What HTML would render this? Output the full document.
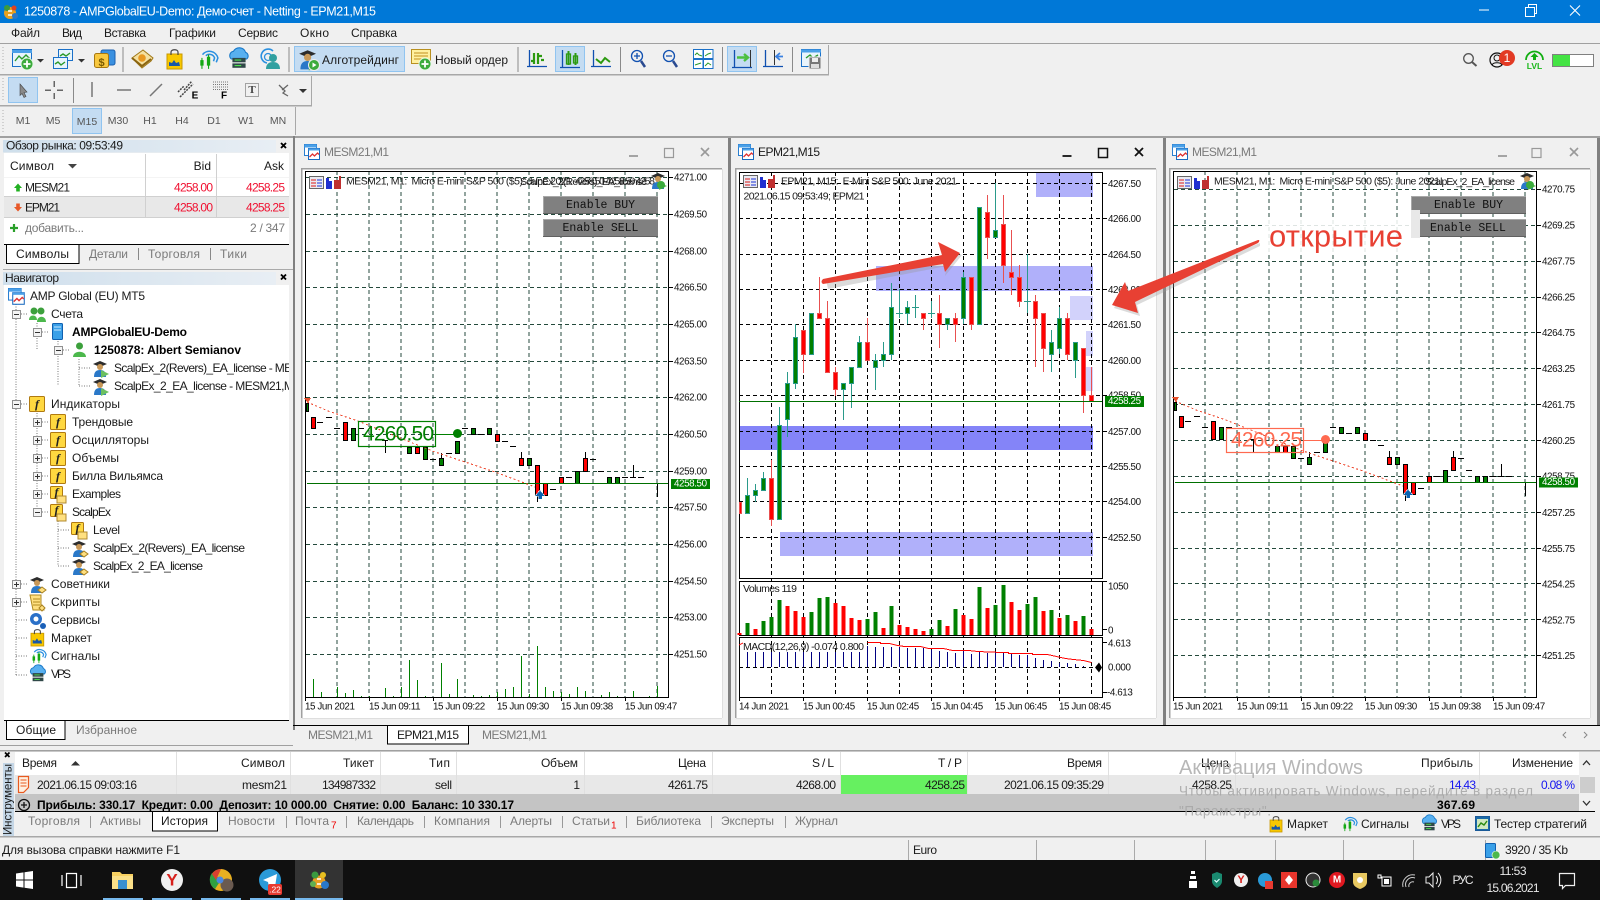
<!DOCTYPE html>
<html lang="ru"><head><meta charset="utf-8"><title>MT5</title>
<style>
html,body{margin:0;padding:0;background:#f0f0f0;width:1600px;height:900px;overflow:hidden}
svg{display:block}
text{font-family:"Liberation Sans","Noto Sans CJK JP",sans-serif;font-size:12px;dominant-baseline:central;fill:#1a1a1a;white-space:pre}
.ax{font-size:9.8px;letter-spacing:-.4px;fill:#111}
.g{fill:#7a7a7a}
.b{font-weight:bold;fill:#000}
.e{text-anchor:end}
.c{text-anchor:middle}
.tf{font-size:10.5px;fill:#555;text-anchor:middle}
.m{font-family:"Liberation Mono",monospace;font-size:11.5px;fill:#111;text-anchor:middle}
.f{font-family:"Liberation Serif",serif;font-style:italic;font-weight:bold;font-size:12px;text-anchor:middle;fill:#222}
.n{fill:none}
.ce{shape-rendering:crispEdges}
</style></head><body>
<svg xmlns="http://www.w3.org/2000/svg" width="1600" height="900" viewBox="0 0 1600 900">
<defs>
<g id="w"><rect x=".5" y=".5" width="12" height="11" fill="#fff" stroke="#2a7fd0"/><rect x=".5" y=".5" width="12" height="3" fill="#4aa0e8"/><rect x="4.5" y="4.5" width="11" height="11" fill="#fff" stroke="#1a6ac0"/><rect x="4.5" y="4.5" width="11" height="2" fill="#4aa0e8"/><path d="M5.5 13l3-3 2 2 3-3 1.500 1.500" fill="none" stroke="#e03030" stroke-width="1.300"/></g>
<g id="hd"><rect x=".5" y=".5" width="14" height="12" fill="#eaeaf2" stroke="#666"/><path d="M2 4h5M2 7h5M2 10h5" stroke="#e06060" stroke-width="1.600"/><path d="M8 4h5M8 7h5M8 10h5" stroke="#6070e0" stroke-width="1.600"/><path d="M17 2h3v3h3v8h-6z" fill="#2030d0"/><path d="M25 4h5V0h2v13h-7z" fill="#c03030"/></g>
<g id="bx"><rect x=".5" y=".5" width="15" height="15" rx="1" fill="#ffd840" stroke="#b07a10"/></g>
<g id="bxf"><rect x=".5" y=".5" width="12" height="12" rx="1" fill="#ffd840" stroke="#b07a10"/><path d="M7 10h9v7H7z" fill="#ffe080" stroke="#b08a30"/></g>
<g id="rb"><path d="M1 4l7-3 7 3-7 3z" fill="#2c2c2c"/><circle cx="8" cy="7" r="3" fill="#c89858"/><path d="M2 17c0-5 2-7 6-7s6 2 6 7z" fill="#2a78c8"/><path d="M9 10l8 4-8 4z" fill="#6cc060"/></g>
<g id="rbk"><path d="M1 4l7-3 7 3-7 3z" fill="#2c2c2c"/><circle cx="8" cy="7" r="3" fill="#c89858"/><path d="M2 17c0-5 2-7 6-7s6 2 6 7z" fill="#2a78c8"/><path d="M13 11l4 3-4 3-4-3z" fill="#ffe080" stroke="#a88020"/></g>
<g id="pls"><circle r="6" fill="#3cab3c" stroke="#e8f8e8"/><path d="M-3.500 0h7M0-3.500v7" stroke="#fff" stroke-width="1.800"/></g>
<g id="bag"><rect x="0" y="5" width="15" height="15" fill="#f8c800" stroke="#c89800"/><path d="M4 6V3c0-3 7-3 7 0v3" class="n" stroke="#444" stroke-width="1.200"/><path d="M2 17v-4l3 1 2-3 2 3 3-1 1 4z" fill="#1858a8"/></g>
<g id="sig"><path d="M5 6a8 8 0 0 1 14 3l-1.500 4M8 7a5 5 0 0 1 8 2l-1 3" class="n" stroke="#2a90e0" stroke-width="1.400"/><path d="M3 11h3v5H3zM9 8h3v8H9z" fill="#14a814"/><path d="M4.500 9v10M10.500 6v13" stroke="#14a814"/></g>
<g id="cl"><path d="M3 10a4 4 0 0 1 2-7 6 6 0 0 1 11 1 3.500 3.500 0 0 1 1 6z" fill="#58b0f0" stroke="#1878c8"/><rect x="4" y="9" width="12" height="4" fill="#304848"/><rect x="4" y="14" width="12" height="4" fill="#304848"/><path d="M6 11h6M6 16h6" stroke="#4ce04c"/></g>
</defs>

<!-- base -->
<rect width="1600" height="900" fill="#f0f0f0"/>
<rect width="1600" height="23" fill="#0078d7"/>
<g transform="translate(2 3)"><circle cx="8" cy="10" r="6" fill="#e8a020"/><circle cx="5" cy="5" r="3" fill="#3a9a40"/><circle cx="12" cy="5" r="2.500" fill="#e04020"/><circle cx="13" cy="13" r="3" fill="#2a78c8"/><path d="M6 8h4M6 12h4" stroke="#fff" stroke-width="1.500"/></g>
<text x="24" y="11.500" style="fill:#fff;font-size:12.500px" textLength="352">1250878 - AMPGlobalEU-Demo: Демо-счет - Netting - EPM21,M15</text>
<path d="M1479 10h10" stroke="#fff"/><path d="M1525.500 7.500h9v9h-9zM1528.500 7.500v-3h8v9h-2" fill="none" stroke="#fff"/><path d="M1570 5.500l10 10M1580 5.500l-10 10" stroke="#fff" stroke-width="1.100"/>

<!-- menu -->
<g>
<text x="11" y="33" textLength="29">Файл</text><text x="62" y="33" textLength="20">Вид</text><text x="104" y="33" textLength="42">Вставка</text><text x="169" y="33" textLength="47">Графики</text><text x="238" y="33" textLength="40">Сервис</text><text x="300" y="33" textLength="29">Окно</text><text x="351" y="33" textLength="46">Справка</text>
</g>
<!-- toolbars -->
<g class="ce">
<rect x="0" y="43" width="1600" height="1" fill="#a0a0a0"/>
<rect x="0" y="74" width="829" height="1.500" fill="#a8a8a8"/><rect x="828" y="45" width="1" height="30" fill="#a8a8a8"/>
<rect x="0" y="105" width="312" height="1.500" fill="#a8a8a8"/><rect x="311" y="76" width="1" height="30" fill="#a8a8a8"/>
<rect x="295" y="107" width="1" height="28" fill="#a8a8a8"/>
<path d="M123 47v25M289 47v25M518 47v25M620.500 47v25M722.500 47v25M792.500 47v25M73.500 78v25" stroke="#8a8a8a"/>
<path d="M3 47v24M3 78v24M3 110v22" stroke="#b0b0b0" stroke-dasharray="1 2"/>
<rect x="294.500" y="46.500" width="110" height="25" fill="#c4dcf2" stroke="#90c4f0"/>
<rect x="555.500" y="46.500" width="29" height="25" fill="#c4dcf2" stroke="#90c4f0"/>
<rect x="727.500" y="46.500" width="29" height="25" fill="#c4dcf2" stroke="#90c4f0"/>
<rect x="8.500" y="77.500" width="29" height="25" fill="#c4dcf2" stroke="#90c4f0"/>
<rect x="72.500" y="108.500" width="29" height="25" fill="#c4dcf2" stroke="#90c4f0"/>
</g>
<!-- row 1 icons -->
<g transform="translate(12 49)"><rect x=".5" y=".5" width="19" height="17" fill="#e8f4fc" stroke="#1a70c8"/><path d="M0 2.500h20" stroke="#4aa0e8" stroke-width="3"/><path d="M3 12l4-5 3 3 4-4 4 4" class="n" stroke="#2a9a2a" stroke-width="1.400"/><use href="#pls" x="15" y="15"/></g>
<path d="M37 59h7l-3.500 3.500z" fill="#333"/>
<g transform="translate(53 49)"><rect x="5.500" y=".5" width="14" height="11" fill="#e8f4fc" stroke="#1a70c8"/><rect x=".5" y="8.500" width="14" height="11" fill="#e8f4fc" stroke="#1a70c8"/><path d="M7 7l3-2 3 2 4-3M2 15l3-2 3 3 4-3" class="n" stroke="#2a9a2a" stroke-width="1.400"/></g>
<path d="M78 59h7l-3.500 3.500z" fill="#333"/>
<g transform="translate(94 49)"><rect x="7" y="1" width="14" height="15" rx="2" fill="#3a90e0" stroke="#1a60b0"/><rect x=".5" y="4.500" width="14" height="14" rx="2" fill="#f8c840" stroke="#a87810"/></g><text x="101.500" y="63" class="c b" style="font-size:11px;fill:#7a5a00">$</text>
<g transform="translate(131 49)"><path d="M1 9L12 1l10 8-2 3-9 7z" fill="#f4e0a0" stroke="#a07818"/><path d="M1 9l10 8 9-7" class="n" stroke="#8a6410" stroke-width="2"/><circle cx="11" cy="9" r="3.800" fill="#e89820"/></g>
<use href="#bag" x="167" y="49"/>
<g transform="translate(197 48) scale(1.100)"><use href="#sig"/></g>
<g transform="translate(228 48) scale(1.100)"><use href="#cl"/></g>
<g transform="translate(260 49)"><path d="M7 14a7 7 0 1 1 6-12" class="n" stroke="#2a90e0" stroke-width="1.600"/><circle cx="8" cy="8" r="3.500" class="n" stroke="#2a90e0" stroke-width="1.300"/><circle cx="13" cy="9" r="4" fill="#30a0a0"/><path d="M6 20c0-5 3-7 7-7s7 2 7 7z" fill="#30a0a0"/></g>
<g transform="translate(298 49) scale(1.200)"><use href="#rb"/></g><circle cx="314" cy="65" r="5.500" fill="#3cab3c" stroke="#eee"/><path d="M312.500 62.500l4 2.500-4 2.500z" fill="#fff"/>
<text x="322" y="60" textLength="77">Алготрейдинг</text>
<g transform="translate(411 49)"><rect x=".5" y=".5" width="19" height="14" fill="#fff0a0" stroke="#b89020"/><path d="M3 4h14M3 7h14M3 10h14" stroke="#c09020"/><use href="#pls" x="14" y="15"/></g>
<text x="435" y="60" textLength="73">Новый ордер</text>
<!-- chart type icons -->
<g fill="none" stroke="#1050b0" stroke-width="1.300">
<path d="M529.500 50v17M527 66.500h20"/><path d="M562.500 50v17M560 67.500h20"/><path d="M593.500 50v17M591 66.500h20"/><path d="M734.500 50v17M732 67.500h20"/><path d="M765.500 50v17M763 66.500h20"/>
<circle cx="637" cy="56" r="5.500"/><circle cx="669" cy="56" r="5.500"/>
<path d="M634 56h6M637 53v6M666 56h6"/>
<path d="M641 61l4 6M673 61l4 6" stroke-width="2.500" stroke="#2a4a90"/>
</g>
<path d="M534 53v11M538 53v11M531 61h3M542 56h-4M541 60h3" stroke="#2c9a10" stroke-width="2.200" fill="none"/>
<g fill="none" stroke="#2c9a10" stroke-width="1.300"><rect x="566.500" y="54" width="4" height="10"/><rect x="573.500" y="56" width="4" height="7"/><path d="M568.500 51v14M575.500 53v12M596 59l5 4 4-5 5 4" stroke-width="2"/></g>
<g fill="#fff" stroke="#1a70c8"><rect x="693.500" y="49.500" width="9.500" height="9"/><rect x="703.500" y="49.500" width="9.500" height="9"/><rect x="693.500" y="59.500" width="9.500" height="9"/><rect x="703.500" y="59.500" width="9.500" height="9"/></g>
<path d="M695 55l2-2 2 2 3 1M705 56l3-2 3-1M695 65l3-1 3-1M705 66l3-3 3 2" class="n" stroke="#2a9a2a"/>
<path d="M737 57.500h11M744 54l4 3.500-4 3.500" class="n" stroke="#4cc040" stroke-width="2.400"/><path d="M750.500 50v17" stroke="#333"/>
<path d="M774.500 50v15" stroke="#333"/><path d="M783 56.500h-6M780 53l-4 3.500 4 3.500" class="n" stroke="#3a80e0" stroke-width="1.800"/>
<g transform="translate(801 49)"><rect x=".5" y=".5" width="19" height="17" fill="#e8f4fc" stroke="#1a70c8"/><path d="M0 2h20" stroke="#4aa0e8" stroke-width="3"/><path d="M5 9l4-3 3 3 5-3" class="n" stroke="#2a9a2a" stroke-width="1.400"/><rect x="8" y="8" width="12" height="12" fill="#777" stroke="#eee"/><rect x="11" y="9" width="6" height="4" fill="#eee"/><rect x="10" y="15" width="8" height="4" fill="#ddd"/></g>
<!-- right icons -->
<circle cx="1468.500" cy="58.500" r="4.800" class="n" stroke="#555" stroke-width="1.300"/><path d="M1472 62l4.500 4" stroke="#555" stroke-width="2"/>
<circle cx="1497" cy="60" r="7" class="n" stroke="#111" stroke-width="1.200"/><circle cx="1497" cy="58" r="3" class="n" stroke="#111"/><path d="M1492 65c1-3 9-3 10 0" class="n" stroke="#111"/>
<circle cx="1507" cy="58" r="8" fill="#e23a24"/><text x="1507" y="58" class="c" style="fill:#fff;font-size:12px">1</text>
<path d="M1526 60a8.500 8.500 0 0 1 17 0" class="n" stroke="#12ae12" stroke-width="1.800"/><path d="M1534.500 53l4 4h-2.500v3h-3v-3h-2.500z" fill="#12ae12"/><text x="1534.500" y="66" class="c b" style="font-size:8.500px;fill:#1ab81a">LVL</text>
<rect x="1552.500" y="54.500" width="41" height="12" fill="#fff" stroke="#808080"/><rect x="1553" y="55" width="17" height="11" fill="#44e344"/>

<!-- row 2 -->
<path d="M20 84l7 8-3 .500 2 4-2 1-2-4-2 2z" fill="#8a8a8a" stroke="#444" stroke-width=".6"/>
<path d="M45 90h6M57 90h6M54 81v6M54 93v6" stroke="#666" stroke-width="1.500" class="ce"/>
<path d="M92 82v15M117 90h14M150 96l12-12" stroke="#777" stroke-width="1.500"/>
<path d="M180 97l13-13M184 90l8-9M178 92l6-6" stroke="#444" stroke-dasharray="2 1" stroke-width="1.500"/><text x="195" y="96" class="c b" style="font-size:10px">E</text>
<path d="M213 82h15M213 84.500h15M213 87h15M213 89.500h15" stroke="#777" stroke-dasharray="1 1" class="ce"/><text x="224" y="96" class="c b" style="font-size:10px">F</text>
<rect x="245.500" y="83.500" width="13" height="13" class="n" stroke="#555" stroke-dasharray="1 1"/><text x="252" y="90" class="c b" style="font-family:'Liberation Serif';font-size:11px;fill:#444">T</text>
<path d="M279 85l6 6-2 2 5 3M288 85l-6 5" class="n" stroke="#666" stroke-width="1.300"/>
<path d="M299 89h8l-4 4z" fill="#333"/>
<!-- row 3 -->
<text x="23" y="121" class="tf">M1</text><text x="53" y="121" class="tf">M5</text><text x="87" y="122" class="tf">M15</text><text x="118" y="121" class="tf">M30</text><text x="150" y="121" class="tf">H1</text><text x="182" y="121" class="tf">H4</text><text x="214" y="121" class="tf">D1</text><text x="246" y="121" class="tf">W1</text><text x="278" y="121" class="tf">MN</text>

<!-- left panels -->
<g class="ce">
<rect x="0" y="136" width="1600" height="2" fill="#a0a0a0"/>
<rect x="293" y="136" width="2" height="594" fill="#808080"/>
<linearGradient id="hg" x1="0" x2="1"><stop offset="0" stop-color="#cfdfec"/><stop offset="1" stop-color="#e8eef4"/></linearGradient>
<rect x="3" y="140" width="273" height="12.500" fill="url(#hg)"/>
<rect x="3" y="272" width="273" height="13" fill="url(#hg)"/>
<rect x="3" y="269" width="290" height="1" fill="#aaa"/>
<rect x="4" y="153" width="285" height="91" fill="#fff"/>
<rect x="4" y="197" width="285" height="20" fill="#e8e8e8"/>
<path d="M4 177.500h285" stroke="#f4f4f4"/>
<path d="M4 196.500h285M4 217.500h285M145.500 154v63M216.500 154v63" stroke="#d0d0d0"/>
<rect x="4" y="285" width="285" height="435" fill="#fff"/>
<rect x="4" y="244" width="285" height="1" fill="#000"/>
<rect x="4" y="720" width="285" height="1" fill="#000"/>
<rect x="6" y="245" width="73" height="19" fill="#fff"/><path d="M6.500 244v19.500h72.500V244" class="n" stroke="#000"/>
<rect x="6" y="721" width="59" height="19" fill="#fff"/><path d="M6.500 720v19.500h58.500V720" class="n" stroke="#000"/>
<path d="M138.500 248v12M210.500 248v12" stroke="#888"/>
<path d="M0 745.500h293" stroke="#a0a0a0"/>
</g>
<text x="6" y="145.500" textLength="117">Обзор рынка: 09:53:49</text>
<path d="M281 143l5 5M286 143l-5 5M281 274.500l5 5M286 274.500l-5 5" stroke="#000" stroke-width="1.800"/>
<text x="10" y="166" textLength="44">Символ</text><path d="M68 164h9l-4.500 4.500z" fill="#444"/>
<text x="211" y="166" class="e">Bid</text><text x="284" y="166" class="e">Ask</text>
<path d="M14 188l4-4.500 4 4.500h-2.200v3.500h-3.600V188z" fill="#22b022"/><path d="M14 207l4 4.500 4-4.500h-2.200v-3.500h-3.600V207z" fill="#e85828"/>
<text x="25" y="187.500" textLength="45">MESM21</text><text x="25" y="207.500" textLength="35">EPM21</text>
<g style="font-size:12px"><text x="213" y="187.500" class="e" style="fill:#f01030" textLength="39">4258.00</text><text x="285" y="187.500" class="e" style="fill:#f01030" textLength="39">4258.25</text><text x="213" y="207.500" class="e" style="fill:#f01030" textLength="39">4258.00</text><text x="285" y="207.500" class="e" style="fill:#f01030" textLength="39">4258.25</text></g>
<path d="M10 228h8M14 224v8" stroke="#2aa02a" stroke-width="2.200"/>
<text x="25" y="228" class="g" textLength="59">добавить...</text><text x="285" y="228" class="e g" textLength="35">2 / 347</text>
<text x="16" y="254" textLength="53">Символы</text><text x="89" y="254" class="g" textLength="39">Детали</text><text x="148" y="254" class="g" textLength="52">Торговля</text><text x="220" y="254" class="g" textLength="27">Тики</text>
<text x="5" y="278" textLength="54">Навигатор</text>

<!-- tree lines -->
<path d="M16 304v371M37 323v27M58 341v45M79 359v27M37 413v100M58 521v45M16 314h12M37 332h12M58 350h12M79 368h12M79 386h12M16 404h12M37 422h12M37 440h12M37 458h12M37 476h12M37 494h12M37 512h12M58 530h12M58 548h12M58 566h12M16 584h12M16 602h12M16 620h12M16 638h12M16 656h12M16 675h12" class="n" stroke="#777" stroke-dasharray="1 1.500"/>
<!-- tree boxes -->
<g fill="#f4f4f4" stroke="#909090" class="ce">
<rect x="12.500" y="310.500" width="8" height="8"/><rect x="33.500" y="328.500" width="8" height="8"/><rect x="54.500" y="346.500" width="8" height="8"/><rect x="12.500" y="400.500" width="8" height="8"/><rect x="33.500" y="418.500" width="8" height="8"/><rect x="33.500" y="436.500" width="8" height="8"/><rect x="33.500" y="454.500" width="8" height="8"/><rect x="33.500" y="472.500" width="8" height="8"/><rect x="33.500" y="490.500" width="8" height="8"/><rect x="33.500" y="508.500" width="8" height="8"/><rect x="12.500" y="580.500" width="8" height="8"/><rect x="12.500" y="598.500" width="8" height="8"/>
</g>
<path d="M14 314.500h5M35 332.500h5M56 350.500h5M14 404.500h5M35 422.500h5M37.500 420v5M35 440.500h5M37.500 438v5M35 458.500h5M37.500 456v5M35 476.500h5M37.500 474v5M35 494.500h5M37.500 492v5M35 512.500h5M14 584.500h5M16.500 582v5M14 602.500h5M16.500 600v5" stroke="#333" class="ce"/>
<!-- tree icons -->
<g transform="translate(8 288) scale(1.050)"><use href="#w"/></g>
<g transform="translate(29 306)"><circle cx="5" cy="5" r="3.500" fill="#3ca03c"/><circle cx="12" cy="5" r="3.500" fill="#3ca03c"/><path d="M0 14c0-6 8-6 8 0zM8 16c0-7 9-7 9 0z" fill="#4cb84c"/></g>
<g transform="translate(52 323)"><rect x=".5" y=".5" width="10" height="16" rx="1" fill="#3aa0e8" stroke="#1060b0"/><path d="M2 4h7M2 7h7" stroke="#c8e8ff"/></g>
<g transform="translate(73 342)"><circle cx="6.500" cy="4" r="3.500" fill="#3ca03c"/><path d="M0 15c0-7 13-7 13 0z" fill="#4cb84c"/></g>
<use href="#rb" x="92" y="360"/><use href="#rb" x="92" y="378"/>
<use href="#bx" x="29" y="396"/><use href="#bx" x="50" y="414"/><use href="#bx" x="50" y="432"/><use href="#bx" x="50" y="450"/><use href="#bx" x="50" y="468"/>
<use href="#bxf" x="50" y="486"/><use href="#bxf" x="50" y="504"/>
<use href="#bxf" x="71" y="522"/>
<use href="#rbk" x="71" y="540"/><use href="#rbk" x="71" y="558"/><use href="#rbk" x="29" y="576"/>
<g transform="translate(29 594)"><path d="M1 1h11v13h3v2H4z" fill="#ffe080" stroke="#b08a20"/><path d="M4 5h7M4 8h7M4 11h7" stroke="#b08a20"/><path d="M13 11l3 3-3 3-3-3z" fill="#ffe080" stroke="#a88020"/></g>
<g transform="translate(29 612)"><circle cx="7" cy="7" r="6" fill="#2a70c8"/><circle cx="7" cy="7" r="2.500" fill="#fff"/><circle cx="14" cy="14" r="3" fill="#1a60b8"/></g>
<g transform="translate(31 629) scale(.85)"><use href="#bag"/></g>
<g transform="translate(30 647) scale(.85)"><use href="#sig"/></g>
<g transform="translate(29 665) scale(.9)"><use href="#cl"/></g>
<!-- f letters -->
<text x="37" y="404" class="f">f</text><text x="58" y="422" class="f">f</text><text x="58" y="440" class="f">f</text><text x="58" y="458" class="f">f</text><text x="58" y="476" class="f">f</text><text x="56.500" y="492" class="f">f</text><text x="56.500" y="510" class="f">f</text><text x="77.500" y="528" class="f">f</text>
<!-- tree text -->
<clipPath id="cp"><rect x="0" y="280" width="289" height="450"/></clipPath>
<g clip-path="url(#cp)">
<text x="30" y="296" textLength="115">AMP Global (EU) MT5</text>
<text x="51" y="314" textLength="32">Счета</text>
<text x="72" y="332" class="b" textLength="115">AMPGlobalEU-Demo</text>
<text x="94" y="350" class="b" textLength="147">1250878: Albert Semianov</text>
<text x="114" y="368" textLength="225">ScalpEx_2(Revers)_EA_license - MESM21,M1</text>
<text x="114" y="386" textLength="186">ScalpEx_2_EA_license - MESM21,M1</text>
<text x="51" y="404" textLength="69">Индикаторы</text>
<text x="72" y="422" textLength="61">Трендовые</text>
<text x="72" y="440" textLength="77">Осцилляторы</text>
<text x="72" y="458" textLength="47">Объемы</text>
<text x="72" y="476" textLength="91">Билла Вильямса</text>
<text x="72" y="494" textLength="49">Examples</text>
<text x="72" y="512" textLength="39">ScalpEx</text>
<text x="93" y="530" textLength="27">Level</text>
<text x="93" y="548" textLength="152">ScalpEx_2(Revers)_EA_license</text>
<text x="93" y="566" textLength="110">ScalpEx_2_EA_license</text>
<text x="51" y="584" textLength="59">Советники</text>
<text x="51" y="602" textLength="49">Скрипты</text>
<text x="51" y="620" textLength="49">Сервисы</text>
<text x="51" y="638" textLength="41">Маркет</text>
<text x="51" y="656" textLength="49">Сигналы</text>
<text x="51" y="674" textLength="20">VPS</text>
</g>
<text x="16" y="730" textLength="40">Общие</text><text x="76" y="730" class="g" textLength="61">Избранное</text>

<!-- MDI windows -->
<g class="ce">
<rect x="728" y="138" width="3" height="587" fill="#808080"/>
<rect x="1163" y="138" width="3" height="587" fill="#808080"/>
<rect x="1597" y="138" width="3" height="587" fill="#808080"/>
<rect x="302" y="169" width="420" height="549" fill="#fff"/><rect x="736" y="169" width="420" height="549" fill="#fff"/><rect x="1170" y="169" width="420" height="549" fill="#fff"/>
<path d="M301.500 718V168.500H722M735.500 718V168.500H1156M1169.500 718V168.500H1590" class="n" stroke="#a0a0a0" stroke-width="1.500"/>
<path d="M722.500 169v549M1156.500 169v549M1590.500 169v549M302 718.500h420M736 718.500h420M1170 718.500h420" stroke="#dedede"/>
</g>
<use href="#w" x="304" y="144"/><use href="#w" x="738" y="144"/><use href="#w" x="1172" y="144"/>
<text x="324" y="152" class="g" textLength="65">MESM21,M1</text><text x="758" y="152" textLength="62">EPM21,M15</text><text x="1192" y="152" class="g" textLength="65">MESM21,M1</text>
<path d="M629 156h9M1498 156h9" stroke="#999" stroke-width="1.800"/><path d="M1062.500 156h9" stroke="#111" stroke-width="1.800"/>
<path d="M664.500 148.500h9v9h-9z" class="n" stroke="#999" stroke-width="1.200"/><rect x="1532" y="148.500" width="9" height="9" class="n" stroke="#999" stroke-width="1.200"/>
<rect x="1098.500" y="148.500" width="9" height="9" class="n" stroke="#111" stroke-width="1.500"/>
<path d="M701 148l8 8M709 148l-8 8M1570 148l8 8M1578 148l-8 8" stroke="#999" stroke-width="1.600"/><path d="M1135 148l8 8M1143 148l-8 8" stroke="#111" stroke-width="1.800"/>

<!-- CHART 1 grid -->
<g class="ce">
<path d="M337 171v526M369 171v526M401 171v526M433 171v526M465 171v526M497 171v526M529 171v526M561 171v526M593 171v526M625 171v526M657 171v526M306 177.500h362M306 214.500h362M306 251.500h362M306 287.500h362M306 324.500h362M306 361.500h362M306 397.500h362M306 434.500h362M306 471.500h362M306 507.500h362M306 544.500h362M306 581.500h362M306 617.500h362M306 654.500h362" class="n" stroke="#244a3c" stroke-dasharray="4 3"/>
<rect x="305.500" y="171.500" width="363" height="526" class="n" stroke="#000"/>
<path d="M668 177.500h5M668 214.500h5M668 251.500h5M668 287.500h5M668 324.500h5M668 361.500h5M668 397.500h5M668 434.500h5M668 471.500h5M668 507.500h5M668 544.500h5M668 581.500h5M668 617.500h5M668 654.500h5M305.500 697v4M369.500 697v4M433.500 697v4M497.500 697v4M561.500 697v4M625.500 697v4" stroke="#000"/>
<path d="M313.500 697v-18M321.500 697v-5M337.500 697v-10M345.500 697v-4M353.500 697v-7M361.500 697v-1M369.500 697v-1M385.500 697v-9M393.500 697v-1M401.500 697v-10M409.500 697v-37M417.500 697v-17M425.500 697v-1M441.500 697v-34M449.500 697v-3M457.500 697v-18M473.500 697v-2M481.500 697v-1M489.500 697v-2M497.500 697v-5M505.500 697v-8M513.500 697v-10M521.500 697v-41M529.500 697v-3M537.500 697v-51M545.500 697v-10M553.500 697v-6M561.500 697v-5M569.500 697v-3M577.500 697v-10M585.500 697v-6M601.500 697v-2M609.500 697v-5M617.500 697v-1M633.500 697v-6M649.500 697v-1M657.500 697v-11" stroke="#008000"/>
</g>
<g class="ce" id="c1">
<path d="M311.500 417.500h4v11h-4zM343.500 422.500h4v18h-4zM415.500 447.500h4v6h-4zM495.500 434.500h4v7h-4zM519.500 458.500h4v7h-4zM535.500 465.500h4v30h-4zM543.500 483.500h4v12h-4zM559.500 477.500h4v6h-4zM583.500 458.500h4v13h-4z" fill="#f00" stroke="#000"/>
<path d="M306.500 403.500h2v8h-2zM351.500 428.500h4v12h-4zM407.500 447.500h4v6h-4zM423.500 447.500h4v12h-4zM439.500 458.500h4v7h-4zM455.500 441.500h4v12h-4zM471.500 428.500h4v6h-4zM487.500 428.500h4v6h-4zM527.500 458.500h4v7h-4zM575.500 471.500h4v12h-4zM607.500 477.500h4v6h-4zM615.500 477.500h4v6h-4z" fill="#008000" stroke="#000"/>
<path d="M521.500 452v6M537.500 495v7M585.500 452v6M441.500 453v5M385.500 440v13M633.500 465v12M657.500 483v14M317 422.500h6M326 417.500h6M334 428.500h6M358 428.500h6M382 440.500h6M430 459.500h6M446 453.500h6M462 428.500h6M478 434.500h6M502 441.500h6M510 446.500h6M550 489.500h6M566 477.500h6M590 459.500h6M598 471.500h6M622 477.500h6M630 477.500h6M638 477.500h6M646 483.500h6M654 483.500h6" stroke="#000"/>
<path d="M307 483.500H668" stroke="#007000"/>
<path d="M307 402l21 9 30 10 57 23 20 8 30 10 30 10 40 15" class="n" stroke="#ee4a30" stroke-dasharray="2 2.500"/>
<path d="M304 398h7l-3 5z" fill="#e8502a"/>
<path d="M540 490l5 6h-3v3h-4v-3h-3z" fill="#0a62b0" stroke="#fff" stroke-width=".5"/>
</g>
<rect x="358.500" y="421.500" width="77" height="25" class="n" stroke="#008000" stroke-width="1.200"/>
<path d="M436 434.500h21" stroke="#008000"/><circle cx="457.500" cy="433.500" r="4.500" fill="#008000"/>
<text x="363" y="434" style="font-size:21px;fill:#008000" textLength="71">4260.50</text>
<use href="#hd" x="309" y="176"/>
<text x="346" y="181.500" style="font-size:10.500px" textLength="226">MESM21, M1:  Micro E-mini S&amp;P 500 ($5): June 2021</text>
<text x="575" y="181.500" style="font-size:10.500px" textLength="80">4258.50 4258.50 4258</text>
<text x="520" y="182" style="font-size:10.500px" textLength="127">ScalpEx_2(Revers)_EA_license</text>
<use href="#rb" x="650" y="172"/><circle cx="661" cy="185" r="4" fill="#3cab3c"/>
<g class="ce"><rect x="543" y="196" width="115" height="18" fill="#808080"/><path d="M543 196.500h115M543.500 196v18" stroke="#a8a8a8"/><path d="M543 213.500h115" stroke="#606060"/>
<rect x="543" y="219" width="115" height="18" fill="#808080"/><path d="M543 219.500h115M543.500 219v18" stroke="#a8a8a8"/><path d="M543 236.500h115" stroke="#606060"/></g>
<text x="600.500" y="205.500" class="m">Enable BUY</text><text x="600.500" y="228.500" class="m">Enable SELL</text>
<!-- chart1 axis -->
<g transform="translate(0 .8)">
<text x="674" y="177" class="ax">4271.00</text><text x="674" y="214" class="ax">4269.50</text><text x="674" y="251" class="ax">4268.00</text><text x="674" y="287" class="ax">4266.50</text><text x="674" y="324" class="ax">4265.00</text><text x="674" y="361" class="ax">4263.50</text><text x="674" y="397" class="ax">4262.00</text><text x="674" y="434" class="ax">4260.50</text><text x="674" y="471" class="ax">4259.00</text><text x="674" y="507" class="ax">4257.50</text><text x="674" y="544" class="ax">4256.00</text><text x="674" y="581" class="ax">4254.50</text><text x="674" y="617" class="ax">4253.00</text><text x="674" y="654" class="ax">4251.50</text>
</g>
<text x="305" y="707" class="ax">15 Jun 2021</text><text x="369" y="707" class="ax">15 Jun 09:11</text><text x="433" y="707" class="ax">15 Jun 09:22</text><text x="497" y="707" class="ax">15 Jun 09:30</text><text x="561" y="707" class="ax">15 Jun 09:38</text><text x="625" y="707" class="ax">15 Jun 09:47</text>
<rect x="671" y="479" width="39" height="10" fill="#008000" class="ce"/><text x="674" y="484" class="ax" style="fill:#fff">4258.50</text>

<!-- CHART 2 -->
<g class="ce">
<rect x="1036" y="172" width="57" height="25" fill="#b0b0fa"/><rect x="876" y="266" width="217" height="25" fill="#b0b0fa"/><rect x="1070" y="296" width="23" height="24" fill="#d2d2fb"/><rect x="1086" y="331" width="7" height="25" fill="#d2d2fb"/><rect x="1086" y="367" width="7" height="24" fill="#d2d2fb"/><rect x="739" y="426" width="354" height="24" fill="#8484f8"/><rect x="780" y="532" width="313" height="24" fill="#b0b0fa"/>
<path d="M771.500 172v525M803.500 172v525M835.500 172v525M867.500 172v525M899.500 172v525M931.500 172v525M963.500 172v525M995.500 172v525M1027.500 172v525M1059.500 172v525M1091.500 172v525M739 183.500h363M739 218.500h363M739 254.500h363M739 289.500h363M739 324.500h363M739 360.500h363M739 395.500h363M739 431.500h363M739 466.500h363M739 501.500h363M739 537.500h363M739 667.500h363" class="n" stroke="#000" stroke-dasharray="4 3"/>
<path d="M739.500 578.500V172.500H1102.500V578.500H739.500ZM739.500 635.500V581.500H1102.500V635.500H739.500ZM739.500 697.500V637.500H1102.500V697.500H739.500Z" class="n" stroke="#000"/>
<path d="M1102 183.500h5M1102 218.500h5M1102 254.500h5M1102 289.500h5M1102 324.500h5M1102 360.500h5M1102 395.500h5M1102 431.500h5M1102 466.500h5M1102 501.500h5M1102 537.500h5M1102 581.500h5M1102 629.500h5M1102 642.500h5M1102 692.500h5M739.500 697v4M803.500 697v4M867.500 697v4M931.500 697v4M995.500 697v4M1059.500 697v4" stroke="#000"/>
<path d="M739.500 635V633M755.500 635V629M787.500 635V606M795.500 635V611M803.500 635V617M835.500 635V603M843.500 635V606M851.500 635V618M859.500 635V620M883.500 635V628M899.500 635V625M907.500 635V627M915.500 635V629M923.500 635V631M947.500 635V626M963.500 635V615M971.500 635V619M987.500 635V608M1011.500 635V602M1019.500 635V610M1043.500 635V611M1059.500 635V618M1075.500 635V621M1091.500 635V629" stroke="#f00" stroke-width="4"/>
<path d="M747.500 635V623M763.500 635V621M771.500 635V617M779.500 635V600M811.500 635V612M819.500 635V598M827.500 635V597M867.500 635V619M875.500 635V612M891.500 635V606M931.500 635V629M939.500 635V620M955.500 635V609M979.500 635V587M995.500 635V605M1003.500 635V585M1027.500 635V604M1035.500 635V597M1051.500 635V610M1067.500 635V615M1083.500 635V616" stroke="#008000" stroke-width="4"/>
<path d="M747.500 667V652M755.500 667V652M763.500 667V652M771.500 667V652M779.500 667V652M787.500 667V652M795.500 667V652M803.500 667V652M811.500 667V652M819.500 667V652M827.500 667V652M835.500 667V652M843.500 667V652M851.500 667V652M859.500 667V652M867.500 667V646M875.500 667V647M883.500 667V647M891.500 667V647M899.500 667V647M907.500 667V648M915.500 667V648M923.500 667V648M931.500 667V650M939.500 667V651M947.500 667V652M955.500 667V653M963.500 667V651M971.500 667V654M979.500 667V652M987.500 667V653M995.500 667V652M1003.500 667V653M1011.500 667V654M1019.500 667V655M1027.500 667V655M1035.500 667V658M1043.500 667V660M1051.500 667V661M1059.500 667V663M1067.500 667V663M1075.500 667V664M1083.500 667V666" stroke="#000080"/>
<path d="M867.500 642.500h13v1h9l8 2 7 1h16l8 2h15l9 2h16l9 1 16 .700 15 .300v1h24v1h15l9 2 9 2 8 1 10 1 8 2" class="n" stroke="#f00"/>
<path d="M739 645l4-2" stroke="#f00"/>
<!-- wicks -->
<path d="M747.500 478V495M755.500 484V502M763.500 472V478M779.500 407V425M787.500 372V437M795.500 324V389M843.500 389V420M851.500 383V408M859.500 336V342M875.500 354V390M883.500 342V367M891.500 283V360M899.500 289V318M907.500 301V324M915.500 295V318M931.500 301V318M947.500 324V330M963.500 272V324M995.500 183V237M1027.500 254V313M1051.500 330V372M1059.500 307V354M1075.500 360V378M896 313.500h7M912 307.500h7M928 313.500h7M1024 301.500h7" class="n" stroke="#2a9a8a"/>
<path d="M771.500 460V526M803.500 354V373M819.500 277V313M827.500 301V318M835.500 367V396M867.500 318V342M923.500 318V330M939.500 295V348M955.500 313V342M971.500 324V330M987.500 195V259M1003.500 195V283M1011.500 230V295M1019.500 265V307M1035.500 295V367M1043.500 348V372M1067.500 313V360M1083.500 395V413M1091.500 367V395" class="n" stroke="#e85050"/>
<path d="M745.500 495.500h4v18h-4zM753.500 490.500h4v5h-4zM761.500 478.500h4v12h-4zM777.500 425.500h4v94h-4zM785.500 383.500h4v36h-4zM793.500 337.500h4v46h-4zM809.500 313.500h4v41h-4zM841.500 383.500h4v6h-4zM849.500 367.500h4v16h-4zM857.500 342.500h4v25h-4zM873.500 360.500h4v7h-4zM881.500 354.500h4v6h-4zM889.500 307.500h4v47h-4zM905.500 307.500h4v6h-4zM945.500 318.500h4v6h-4zM961.500 277.500h4v41h-4zM977.500 207.500h4v117h-4zM993.500 230.500h4v7h-4zM1049.500 342.500h4v12h-4zM1057.500 318.500h4v30h-4zM1073.500 342.500h4v18h-4z" fill="#008000" stroke="#2a9a8a"/>
<path d="M739.500 502.500h2v11h-2zM769.500 478.500h4v41h-4zM801.500 330.500h4v24h-4zM817.500 313.500h4v5h-4zM825.500 318.500h4v54h-4zM833.500 372.500h4v17h-4zM865.500 342.500h4v18h-4zM921.500 313.500h4v5h-4zM937.500 313.500h4v11h-4zM953.500 318.500h4v6h-4zM969.500 277.500h4v47h-4zM985.500 212.500h4v25h-4zM1001.500 224.500h4v41h-4zM1009.500 272.500h4v5h-4zM1017.500 277.500h4v24h-4zM1033.500 301.500h4v17h-4zM1041.500 313.500h4v35h-4zM1065.500 318.500h4v36h-4zM1081.500 348.500h4v47h-4zM1089.500 395.500h4v6h-4z" fill="#f00" stroke="#e85050"/>
<path d="M739 401.500h363" stroke="#007000"/>
</g>
<path d="M1095 667.500l4-5 3 5-3 5z" fill="#000"/>
<use href="#hd" x="743" y="175"/>
<text x="781" y="181.500" style="font-size:10.500px" textLength="176">EPM21, M15:  E-Mini S&amp;P 500: June 2021</text>
<text x="743.500" y="196.500" style="font-size:10.500px" textLength="121">2021.06.15 09:53:49; EPM21</text>
<text x="743" y="589" style="font-size:10.500px" textLength="54">Volumes 119</text>
<text x="743" y="647" style="font-size:10.500px" textLength="121">MACD(12,26,9) -0.074 0.800</text>
<g transform="translate(0 .8)">
<text x="1108" y="183.500" class="ax">4267.50</text><text x="1108" y="218.500" class="ax">4266.00</text><text x="1108" y="254.500" class="ax">4264.50</text><text x="1108" y="289.500" class="ax">4263.00</text><text x="1108" y="324.500" class="ax">4261.50</text><text x="1108" y="360.500" class="ax">4260.00</text><text x="1108" y="395" class="ax">4258.50</text><text x="1108" y="431.500" class="ax">4257.00</text><text x="1108" y="466.500" class="ax">4255.50</text><text x="1108" y="501.500" class="ax">4254.00</text><text x="1108" y="537.500" class="ax">4252.50</text>
<text x="1108" y="586" class="ax">1050</text><text x="1108" y="630" class="ax">0</text><text x="1108" y="643" class="ax">4.613</text><text x="1108" y="667" class="ax">0.000</text><text x="1107" y="692" class="ax">-4.613</text>
</g>
<text x="739" y="707" class="ax">14 Jun 2021</text><text x="803" y="707" class="ax">15 Jun 00:45</text><text x="867" y="707" class="ax">15 Jun 02:45</text><text x="931" y="707" class="ax">15 Jun 04:45</text><text x="995" y="707" class="ax">15 Jun 06:45</text><text x="1059" y="707" class="ax">15 Jun 08:45</text>
<rect x="1105" y="396" width="39" height="11" fill="#008000" class="ce"/><text x="1108" y="401.500" class="ax" style="fill:#fff">4258.25</text>

<!-- CHART 3 -->
<g class="ce">
<path d="M1205 171v526M1237 171v526M1269 171v526M1301 171v526M1333 171v526M1365 171v526M1397 171v526M1429 171v526M1461 171v526M1493 171v526M1525 171v526M1174 189.500h362M1174 225.500h362M1174 261.500h362M1174 297.500h362M1174 332.500h362M1174 368.500h362M1174 404.500h362M1174 440.500h362M1174 476.500h362M1174 512.500h362M1174 548.500h362M1174 583.500h362M1174 619.500h362M1174 655.500h362" class="n" stroke="#244a3c" stroke-dasharray="4 3"/>
<rect x="1173.500" y="171.500" width="363" height="526" class="n" stroke="#000"/>
<path d="M1536 189.500h5M1536 225.500h5M1536 261.500h5M1536 297.500h5M1536 332.500h5M1536 368.500h5M1536 404.500h5M1536 440.500h5M1536 476.500h5M1536 512.500h5M1536 548.500h5M1536 583.500h5M1536 619.500h5M1536 655.500h5M1173.500 697v4M1237.500 697v4M1301.500 697v4M1365.500 697v4M1429.500 697v4M1493.500 697v4" stroke="#000"/>
</g>
<use href="#c1" x="868" y="-1"/>
<rect x="1226.500" y="428.500" width="77" height="24" class="n" stroke="#ff6a50" stroke-width="1.200"/>
<path d="M1304 440.500h21" stroke="#ff6a50"/><circle cx="1325.500" cy="439.500" r="4.500" fill="#ff6a50"/>
<text x="1231" y="440" style="font-size:21px;fill:#ff6a50" textLength="71">4260.25</text>
<use href="#hd" x="1177" y="176"/>
<text x="1214" y="181.500" style="font-size:10.500px" textLength="226">MESM21, M1:  Micro E-mini S&amp;P 500 ($5): June 2021</text>
<text x="1425" y="182" style="font-size:10.500px" textLength="90">ScalpEx_2_EA_license</text>
<use href="#rb" x="1519" y="172"/><circle cx="1530" cy="185" r="4" fill="#3cab3c"/>
<g class="ce"><rect x="1411" y="196" width="115" height="18" fill="#808080"/><path d="M1411 196.500h115M1411.500 196v18" stroke="#a8a8a8"/><path d="M1411 213.500h115" stroke="#606060"/>
<rect x="1411" y="219" width="115" height="18" fill="#808080"/><path d="M1411 219.500h115M1411.500 219v18" stroke="#a8a8a8"/><path d="M1411 236.500h115" stroke="#606060"/></g>
<rect x="1411" y="210" width="9" height="28" fill="#e8e8e8"/>
<text x="1468.500" y="205.500" class="m">Enable BUY</text><text x="1468" y="228.500" class="m">Enable SELL</text>
<rect x="1262" y="218" width="148" height="36" fill="#fff" opacity=".85"/>
<g transform="translate(0 .8)">
<text x="1542" y="189" class="ax">4270.75</text><text x="1542" y="225" class="ax">4269.25</text><text x="1542" y="261" class="ax">4267.75</text><text x="1542" y="297" class="ax">4266.25</text><text x="1542" y="332.500" class="ax">4264.75</text><text x="1542" y="368.500" class="ax">4263.25</text><text x="1542" y="404.500" class="ax">4261.75</text><text x="1542" y="440.500" class="ax">4260.25</text><text x="1542" y="476" class="ax">4258.75</text><text x="1542" y="512.500" class="ax">4257.25</text><text x="1542" y="548.500" class="ax">4255.75</text><text x="1542" y="584" class="ax">4254.25</text><text x="1542" y="620" class="ax">4252.75</text><text x="1542" y="655.500" class="ax">4251.25</text>
</g>
<text x="1173" y="707" class="ax">15 Jun 2021</text><text x="1237" y="707" class="ax">15 Jun 09:11</text><text x="1301" y="707" class="ax">15 Jun 09:22</text><text x="1365" y="707" class="ax">15 Jun 09:30</text><text x="1429" y="707" class="ax">15 Jun 09:38</text><text x="1493" y="707" class="ax">15 Jun 09:47</text>
<rect x="1539" y="477.500" width="39" height="10" fill="#008000" class="ce"/><text x="1542" y="482.500" class="ax" style="fill:#fff">4258.50</text>
<!-- annotation -->
<text x="1269" y="236" style="font-size:31px;fill:#e84033" textLength="134">открытие</text>
<path d="M826 286l119-23-2 10 17-21-23-10 3 11-116 24z" fill="#999" opacity=".35" transform="translate(2 3)"/>
<path d="M1258 243l-123 59 3 11-26-8 13-24 3 10 130-51z" fill="#999" opacity=".35" transform="translate(2 3)"/>
<path d="M823 279L942 255l-4-13 22 11-15 19-2-8L823 284q-3-2 0-5z" fill="#e84033"/>
<path d="M1258 240L1128 291l-3-9-13 23 26 8-3-11 123-59q2-2 1-3z" fill="#e84033"/>

<!-- doc tabs -->
<g class="ce">
<rect x="293" y="725" width="1307" height="1" fill="#000"/>
<rect x="387" y="726" width="82" height="18" fill="#fff"/><path d="M387.500 725v19h81v-19" class="n" stroke="#000"/>
</g>
<text x="308" y="735" class="g" textLength="65">MESM21,M1</text><text x="397" y="735" textLength="62">EPM21,M15</text><text x="482" y="735" class="g" textLength="65">MESM21,M1</text>
<path d="M1566 732l-3 3 3 3M1584 732l3 3-3 3" class="n" stroke="#888"/>

<!-- toolbox -->
<g class="ce">
<rect x="0" y="750" width="1600" height="1.500" fill="#a0a0a0"/>
<rect x="3" y="763" width="11" height="73" fill="#c4d6e6"/>
<rect x="15" y="752" width="1564" height="23" fill="#fff"/>
<rect x="15" y="775" width="1564" height="19" fill="#e8e8e8"/>
<rect x="840" y="775" width="127" height="19" fill="#66f060"/>
<rect x="15" y="794" width="1564" height="17" fill="#c4c4c4"/>
<rect x="1579" y="752" width="16" height="59" fill="#f0f0f0"/><rect x="1580" y="777" width="15" height="16" fill="#cdcdcd"/>
<path d="M176.500 752v42M290.500 752v42M380.500 752v42M456.500 752v42M584.500 752v42M712.500 752v42M840.500 752v42M967.500 752v42M1108.500 752v42M1235.500 752v42M1479.500 752v42" stroke="#e0e0e0"/>
<rect x="15" y="811" width="1580" height="1.200" fill="#000"/>
<rect x="152" y="812" width="66" height="19" fill="#fff"/><path d="M152.500 811v20h65v-20" class="n" stroke="#000"/>
<path d="M90.500 816v12M286.500 816v12M346.500 816v12M424.500 816v12M500.500 816v12M562.500 816v12M626.500 816v12M711.500 816v12M785.500 816v12" stroke="#999"/>
<rect x="0" y="836" width="1600" height="1.500" fill="#a8a8a8"/>
<path d="M908.500 840v20M1036.500 840v20M1134.500 840v20M1205.500 840v20M1275.500 840v20M1343.500 840v20M1413.500 840v20M1485.500 840v20" stroke="#aaa"/>
</g>
<path d="M5 752.500l4.500 4.500M9.500 752.500l-4.500 4.500" stroke="#000" stroke-width="1.700"/>
<text transform="translate(8.500 835) rotate(-90)" x="0" y="0" textLength="71" style="font-size:11.500px">Инструменты</text>
<path d="M1583 765l3.500-4 3.500 4M1583 801l3.500 4 3.500-4" class="n" stroke="#333" stroke-width="1.300"/>
<text x="22" y="763" textLength="35">Время</text><path d="M71 765.500h9l-4.500-4.500z" fill="#333"/>
<text x="285" y="763" class="e" textLength="44">Символ</text><text x="374" y="763" class="e" textLength="31">Тикет</text><text x="450" y="763" class="e" textLength="21">Тип</text><text x="578" y="763" class="e" textLength="37">Объем</text><text x="706" y="763" class="e" textLength="28">Цена</text><text x="834" y="763" class="e" textLength="22">S / L</text><text x="962" y="763" class="e" textLength="24">T / P</text><text x="1102" y="763" class="e" textLength="35">Время</text><text x="1229" y="763" class="e" textLength="28">Цена</text><text x="1473" y="763" class="e" textLength="52">Прибыль</text><text x="1573" y="763" class="e" textLength="61">Изменение</text>
<g transform="translate(18 776)"><path d="M.5.500h10v11l-5 5h-5z" fill="#fff0e0" stroke="#e85a20" stroke-width="1.200"/><path d="M2.500 4h6M2.500 7h6M2.500 10h6" stroke="#e85a20"/></g>
<text x="37" y="785" textLength="100">2021.06.15 09:03:16</text><text x="287" y="785" class="e" textLength="45">mesm21</text><text x="376" y="785" class="e" textLength="54">134987332</text><text x="452" y="785" class="e" textLength="17">sell</text><text x="580" y="785" class="e">1</text><text x="708" y="785" class="e" textLength="40">4261.75</text><text x="836" y="785" class="e" textLength="40">4268.00</text><text x="965" y="785" class="e" textLength="40">4258.25</text><text x="1104" y="785" class="e" textLength="100">2021.06.15 09:35:29</text><text x="1232" y="785" class="e" textLength="40">4258.25</text>
<text x="1476" y="785" class="e" style="fill:#1414f0" textLength="27">14.43</text><text x="1575" y="785" class="e" style="fill:#1414f0" textLength="34">0.08 %</text>
<circle cx="24" cy="805" r="5.500" class="n" stroke="#111" stroke-width="1.300"/><path d="M21 805h6M24 802v6" stroke="#111" stroke-width="1.300"/>
<text x="37" y="805" class="b" textLength="477">Прибыль: 330.17  Кредит: 0.00  Депозит: 10 000.00  Снятие: 0.00  Баланс: 10 330.17</text><text x="1475" y="805" class="e b" textLength="38">367.69</text>
<!-- bottom tabs -->
<text x="28" y="821" class="g" textLength="52">Торговля</text><text x="100" y="821" class="g" textLength="41">Активы</text><text x="161" y="821" textLength="47">История</text><text x="228" y="821" class="g" textLength="47">Новости</text><text x="295" y="821" class="g" textLength="34">Почта</text><text x="331" y="826" style="fill:#e00;font-size:10px">7</text><text x="357" y="821" class="g" textLength="57">Календарь</text><text x="434" y="821" class="g" textLength="56">Компания</text><text x="510" y="821" class="g" textLength="42">Алерты</text><text x="572" y="821" class="g" textLength="38">Статьи</text><text x="611" y="826" style="fill:#e00;font-size:10px">1</text><text x="636" y="821" class="g" textLength="65">Библиотека</text><text x="721" y="821" class="g" textLength="53">Эксперты</text><text x="795" y="821" class="g" textLength="43">Журнал</text>
<g transform="translate(1270 816) scale(.8)"><use href="#bag"/></g><text x="1287" y="824" textLength="41">Маркет</text>
<g transform="translate(1341 815) scale(.85)"><use href="#sig"/></g><text x="1361" y="824" textLength="48">Сигналы</text>
<g transform="translate(1421 815) scale(.85)"><use href="#cl"/></g><text x="1441" y="824" textLength="20">VPS</text>
<g transform="translate(1475 816)"><rect x=".5" y=".5" width="14" height="14" fill="#1a6aa8" stroke="#1a5a98"/><rect x="2" y="3" width="11" height="10" fill="#d0e8c0"/><path d="M3 11l3-4 3 2 3-4" class="n" stroke="#2a8a10" stroke-width="1.400"/></g><text x="1494" y="824" textLength="93">Тестер стратегий</text>
<!-- status -->
<text x="2" y="850" textLength="178">Для вызова справки нажмите F1</text><text x="913" y="850" textLength="24">Euro</text>
<g transform="translate(1485 843)"><rect x=".5" y=".5" width="10" height="14" rx="1" fill="#3aa0e8" stroke="#1060b0"/><circle cx="11" cy="12" r="4" fill="#4cb84c" stroke="#fff" stroke-width=".6"/></g>
<text x="1505" y="850" textLength="63">3920 / 35 Kb</text>
<!-- activation watermark -->
<g opacity=".9"><text x="1179" y="768" style="font-size:20px;fill:#b0b0b0" textLength="184">Активация Windows</text>
<text x="1179" y="791" style="font-size:13.500px;fill:#a8a8a8" textLength="354">Чтобы активировать Windows, перейдите в раздел</text>
<text x="1179" y="811" style="font-size:13.500px;fill:#a8a8a8" textLength="92">"Параметры".</text></g>

<!-- taskbar -->
<rect x="0" y="860" width="1600" height="40" fill="#101010"/>
<rect x="295" y="860" width="48" height="38" fill="#333"/>
<g class="ce" fill="#76b9ed"><rect x="103" y="898" width="40" height="2"/><rect x="152" y="898" width="40" height="2"/><rect x="201" y="898" width="40" height="2"/><rect x="250" y="898" width="40" height="2"/><rect x="295" y="898" width="48" height="2"/></g>
<path d="M16 873.500l7.500-1.100v7.100H16zM24.500 872.300l8.500-1.300v8.500h-8.500zM16 880.500h7.500v7.100L16 886.500zM24.500 880.500H33V889l-8.500-1.300z" fill="#fff"/>
<path d="M66.500 873.500h10v14h-10zM62 875v11M81 875v11" class="n" stroke="#fff" stroke-width="1.200"/>
<path d="M112 872h8l2 2h11v15h-21z" fill="#f8d060"/><path d="M112 876h21v13h-21z" fill="#fbe088"/><path d="M118 880h9v9h-9z" fill="#3a90d0"/>
<circle cx="172" cy="880" r="11" fill="#f0f0f0"/><text x="172" y="880" class="c b" style="font-size:17px;fill:#d8201c">Y</text>
<circle cx="221" cy="880" r="11" fill="#e8b020"/><path d="M221 880L212 873a11 11 0 0 0 3 16z" fill="#30a040"/><path d="M221 869a11 11 0 0 0-9 5l4 6z" fill="#d84030"/><circle cx="227" cy="885" r="6.500" fill="#6a5a50"/><circle cx="220" cy="880" r="3.500" fill="#4a88e0"/>
<circle cx="270" cy="880" r="11" fill="#2a9ad8"/><path d="M263 880l14-6-2 13-4-3-2 3-1-5z" fill="#fff"/><rect x="268" y="884" width="14" height="11" rx="2" fill="#e83a30"/><text x="275" y="889.500" class="c" style="font-size:8.500px;fill:#fff">.22</text>
<g transform="translate(309 870)"><circle cx="10" cy="12" r="6.500" fill="#e8a020"/><circle cx="6" cy="5" r="3.500" fill="#3a9a40"/><circle cx="14" cy="5" r="3" fill="#e8c020"/><circle cx="16" cy="15" r="4" fill="#2a78c8"/><circle cx="4" cy="14" r="3" fill="#60b050"/><path d="M8 9h4M8 14h4" stroke="#fff" stroke-width="1.400"/></g>
<!-- tray -->
<path d="M1191 871h4v3h-4zM1190 876h6v3h-6zM1189 881h8v7h-8z" fill="#fff"/>
<path d="M1217 872l5 2v7c0 3-2 5-5 7-3-2-5-4-5-7v-7z" fill="#1a8a70"/><path d="M1214.500 880l2 2 3-3" class="n" stroke="#dff" stroke-width="1.200"/>
<circle cx="1241" cy="880" r="7" fill="#f0f0f0"/><text x="1241" y="880" class="c b" style="font-size:11px;fill:#d8201c">Y</text>
<circle cx="1265" cy="880" r="7" fill="#2a9ad8"/><rect x="1265" y="881" width="8" height="8" fill="#e83a30"/>
<rect x="1281" y="872" width="16" height="16" fill="#e8352c"/><path d="M1289 875l4 5-4 5-4-5z" fill="#fff"/>
<circle cx="1313" cy="880" r="7" fill="#333" stroke="#eee"/><circle cx="1316" cy="883" r="3.500" fill="#2a8a3a"/>
<circle cx="1337" cy="880" r="8" fill="#e01820"/><text x="1337" y="880" class="c b" style="font-size:10px;fill:#fff">M</text>
<path d="M1353 873h14v9c0 4-4 6-7 7-3-1-7-3-7-7z" fill="#e8c860"/><circle cx="1360" cy="880" r="3" fill="#fff"/>
<path d="M1378 875h3v3h-3zM1382 877h9v9h-9z" class="n" stroke="#fff"/><rect x="1384" y="879" width="5" height="5" fill="#fff"/>
<path d="M1403 887a10 10 0 0 1 12-12M1406 887a7 7 0 0 1 9-9M1409 887a4 4 0 0 1 5-5" class="n" stroke="#ccc"/>
<path d="M1426 877h3l4-4v14l-4-4h-3z" class="n" stroke="#eee"/><path d="M1436 876a6 6 0 0 1 0 8M1438 873a10 10 0 0 1 0 14" class="n" stroke="#eee"/>
<text x="1463" y="880" class="c" style="fill:#e8e8e8" textLength="21">РУС</text>
<text x="1513" y="871" class="c" style="fill:#e8e8e8" textLength="27">11:53</text>
<text x="1513" y="888" class="c" style="fill:#e8e8e8" textLength="53">15.06.2021</text>
<path d="M1559.500 873.500h15v12h-9l-3 3v-3h-3z" class="n" stroke="#eee" stroke-width="1.200"/>
</svg>
</body></html>
